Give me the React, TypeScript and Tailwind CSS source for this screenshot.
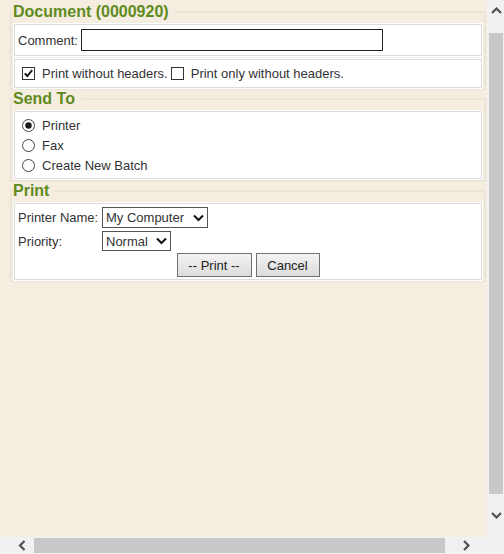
import type { ReactNode } from 'react'

type Dir = 'up' | 'down' | 'left' | 'right'

const CHEVRONS: Record<Dir, string> = {
  up: 'M1 7 L5.5 2.5 L10 7',
  down: 'M1 3 L5.5 7.5 L10 3',
  left: 'M7.5 1 L3 5.5 L7.5 10',
  right: 'M3 1 L7.5 5.5 L3 10',
}

function Arrow({ dir }: { dir: Dir }) {
  return (
    <svg width="11" height="11" viewBox="0 0 11 11">
      <path d={CHEVRONS[dir]} fill="none" stroke="#505050" strokeWidth="2.2" />
    </svg>
  )
}

function Section({ title, className, children }: { title: string; className?: string; children: ReactNode }) {
  return (
    <fieldset className={`ml-[10px] w-[476px] border-2 border-[#ebe5d8] ${className ?? ''}`}>
      <legend className="ml-[1px] pr-[6px] text-[16px] leading-[18px] font-bold text-[#5f8a1e]">{title}</legend>
      {children}
    </fieldset>
  )
}

function Box({ className, children }: { className?: string; children: ReactNode }) {
  return (
    <div className={`mx-[2px] mt-[3px] border border-[#dcdcdc] bg-white pl-[3px] shadow-[0_0_0_1px_#ffffff] ${className ?? ''}`}>
      {children}
    </div>
  )
}

function Checkbox({ checked }: { checked?: boolean }) {
  return (
    <svg width="13" height="13" viewBox="0 0 13 13" className="shrink-0">
      <rect x="0.5" y="0.5" width="12" height="12" fill="#fff" stroke="#333" />
      {checked && <path d="M2.8 6.4 L5.3 9 L10.2 3.2" fill="none" stroke="#111" strokeWidth="1.9" />}
    </svg>
  )
}

function Radio({ checked }: { checked?: boolean }) {
  return (
    <svg width="13" height="13" viewBox="0 0 13 13" className="ml-[4px] mr-[7px] shrink-0">
      <circle cx="6.5" cy="6.5" r="6" fill="#fff" stroke="#444" />
      {checked && <circle cx="6.5" cy="6.5" r="3.2" fill="#1a1a1a" />}
    </svg>
  )
}

function FakeSelect({ value, className }: { value: string; className: string }) {
  return (
    <div className={`flex items-center justify-between border border-[#555] bg-white pl-[3px] pr-[3px] ${className}`}>
      <span>{value}</span>
      <svg width="11" height="8" viewBox="0 0 11 8">
        <path d="M1 1.5 L5.5 6 L10 1.5" fill="none" stroke="#111" strokeWidth="2" />
      </svg>
    </div>
  )
}

export default function App() {
  return (
    <div className="flex h-[554px] w-[504px] flex-col overflow-hidden font-['Liberation_Sans',Arial,sans-serif] text-[13px] leading-[15px] text-[#333]">
      <div className="flex min-h-0 flex-1">
        {/* page */}
        <div className="flex-1 bg-[#f5eddf] pt-[3px]">
          <Section title="Document (0000920)">
            <Box className="flex items-center py-[4px]">
              <span>Comment:</span>
              <input className="ml-[3px] h-[22px] w-[302px] border border-[#222] bg-white outline-none" />
            </Box>
            <Box className="flex items-center py-[6px]">
              <span className="ml-[4px] mr-[7px] flex">
                <Checkbox checked />
              </span>
              <span>Print without headers.</span>
              <span className="ml-[3px] mr-[7px] flex">
                <Checkbox />
              </span>
              <span>Print only without headers.</span>
            </Box>
          </Section>

          <Section title="Send To" className="pb-[1px]">
            <Box className="pt-[4px] pb-[3px]">
              <div className="flex h-[19px] items-center">
                <Radio checked />
                <span>Printer</span>
              </div>
              <div className="flex h-[20px] items-center">
                <Radio />
                <span>Fax</span>
              </div>
              <div className="flex h-[20px] items-center">
                <Radio />
                <span>Create New Batch</span>
              </div>
            </Box>
          </Section>

          <Section title="Print">
            <Box className="flex flex-col gap-[3px] pt-[3px] pb-[2px]">
              <div className="flex items-center">
                <span className="w-[84px]">Printer Name:</span>
                <FakeSelect value="My Computer" className="h-[21px] w-[106px]" />
              </div>
              <div className="flex items-center">
                <span className="w-[84px]">Priority:</span>
                <FakeSelect value="Normal" className="h-[20px] w-[69px]" />
              </div>
              <div className="-mt-[1px] flex justify-center gap-[4px] pr-[3px]">
                <button className="h-[24px] w-[75px] border border-[#707070] bg-linear-to-b from-[#f3f3f3] to-[#dcdcdc] text-[13px] text-[#222]">
                  -- Print --
                </button>
                <button className="h-[24px] w-[64px] border border-[#707070] bg-linear-to-b from-[#f3f3f3] to-[#dcdcdc] text-[13px] text-[#222]">
                  Cancel
                </button>
              </div>
            </Box>
          </Section>
        </div>

        {/* vertical scrollbar */}
        <div className="flex w-[17px] flex-col bg-[#f1f1f1]">
          <div className="flex h-[17px] items-center justify-center pt-[6px] pl-[1px]">
            <Arrow dir="up" />
          </div>
          <div className="mt-[16px] ml-[2px] h-[461px] w-[14px] bg-[#c8c8c8]" />
          <div className="flex flex-1 items-center justify-center pl-[1px]">
            <Arrow dir="down" />
          </div>
        </div>
      </div>

      {/* horizontal scrollbar */}
      <div className="flex h-[17px] bg-[#f1f1f1]">
        <div className="flex w-[34px] items-center justify-center pl-[10px]">
          <Arrow dir="left" />
        </div>
        <div className="my-[1px] w-[411px] bg-[#c8c8c8]" />
        <div className="flex w-[42px] items-center justify-center">
          <Arrow dir="right" />
        </div>
        <div className="w-[17px] bg-[#f1f1f1]" />
      </div>
    </div>
  )
}
